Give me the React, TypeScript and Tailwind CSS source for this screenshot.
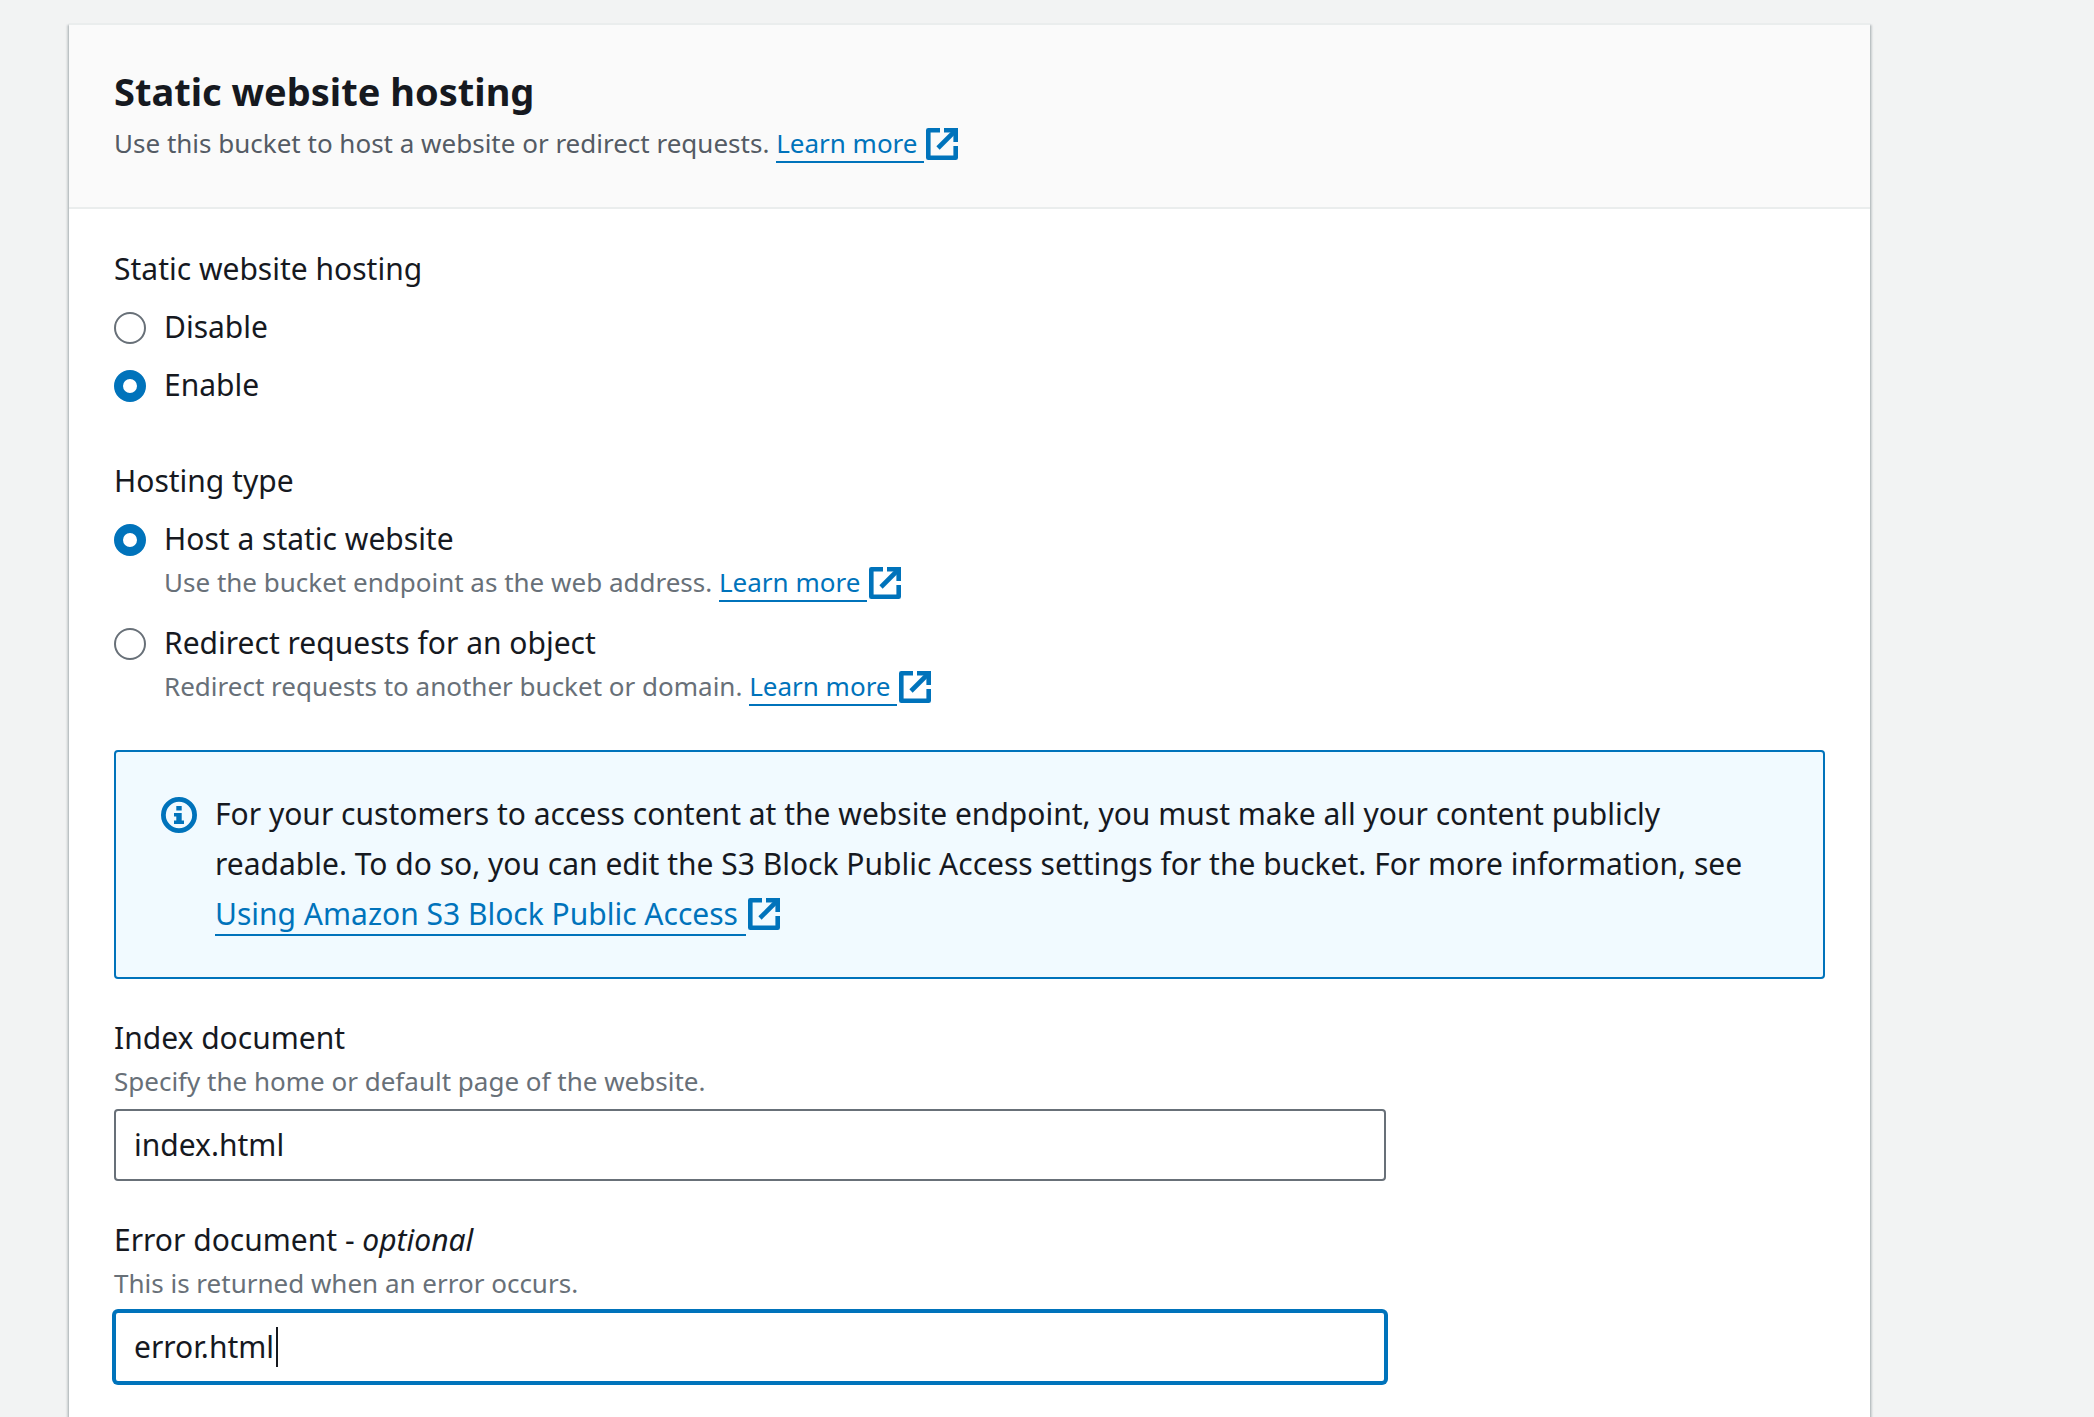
import { useState } from 'react';
import type { ReactNode } from 'react';

const ExternalIcon = ({ className = '' }: { className?: string }) => (
  <svg
    viewBox="0 0 32 32"
    className={`ml-0.5 inline-block size-8 ${className}`}
    fill="none"
    stroke="currentColor"
    strokeWidth={4.6}
    strokeLinejoin="round"
    aria-hidden="true"
  >
    <path d="M14 2.3H2.3v27.4h27.4V18" />
    <path d="M18 2.3h11.7V14" strokeLinejoin="miter" />
    <path d="M28.5 3.5 12 20" />
  </svg>
);

const InfoIcon = () => (
  <svg viewBox="0 0 36 36" className="mt-2 size-9 shrink-0 text-[#0073bb]" aria-hidden="true">
    <circle cx="18" cy="18" r="15.6" fill="none" stroke="currentColor" strokeWidth={4.8} />
    <path fill="currentColor" d="M15.3 9h5.4v4.4h-5.4zM13 16h7.7v7.4H23V27H13v-3.6h2.3v-3.8H13z" />
  </svg>
);

type ExternalLinkProps = {
  href: string;
  children: ReactNode;
  iconClassName?: string;
};

const ExternalLink = ({ href, children, iconClassName = 'align-[-7px]' }: ExternalLinkProps) => (
  <a href={href} className="whitespace-nowrap text-[#0073bb]">
    <span className="border-b-2 border-[#0073bb]">{children}&nbsp;</span>
    <ExternalIcon className={iconClassName} />
  </a>
);

type RadioOptionProps = {
  name: string;
  value: string;
  label: string;
  checked: boolean;
  onSelect: (value: string) => void;
  description?: ReactNode;
};

const RadioOption = ({ name, value, label, checked, onSelect, description }: RadioOptionProps) => {
  const id = `${name}-${value}`;
  return (
    <div className="flex gap-[18px]">
      <input
        type="radio"
        id={id}
        name={name}
        value={value}
        checked={checked}
        onChange={() => onSelect(value)}
        className="mt-2.5 size-8 shrink-0 appearance-none rounded-full border-2 border-[#687078] bg-white checked:border-[9px] checked:border-[#0073bb]"
      />
      <div>
        <label htmlFor={id} className="block">
          {label}
        </label>
        {description && <p className="text-[26px] leading-9 text-[#687078]">{description}</p>}
      </div>
    </div>
  );
};

export default function App() {
  const [hosting, setHosting] = useState('enable');
  const [hostingType, setHostingType] = useState('static');
  const [indexDocument, setIndexDocument] = useState('index.html');
  const [errorDocument, setErrorDocument] = useState('error.html');

  return (
    <main className="flex min-h-screen bg-[#f2f3f3] pt-[23px] pr-[224px] pl-[69px] font-['Noto_Sans',sans-serif] text-[30px] leading-[50px] text-[#16191f]">
      <section className="min-w-0 flex-1 border-t-2 border-[#eaeded] bg-white shadow-[0_2px_2px_rgba(0,28,36,0.3),2px_2px_2px_rgba(0,28,36,0.15),-2px_2px_2px_rgba(0,28,36,0.15)]">
        <header className="border-b-2 border-[#eaeded] bg-[#fafafa] px-[45px] pt-[34px] pb-11">
          <h2 className="text-[38px] leading-[64px] font-bold">Static website hosting</h2>
          <p className="text-[26px] leading-10 text-[#545b64]">
            Use this bucket to host a website or redirect requests.{' '}
            <ExternalLink href="#website-hosting">Learn more</ExternalLink>
          </p>
        </header>

        <form className="flex flex-col gap-[34px] px-[45px] pt-[35px] pb-8">
          <fieldset className="pb-3">
            <legend className="mb-2">Static website hosting</legend>
            <div className="flex flex-col gap-2">
              <RadioOption
                name="hosting"
                value="disable"
                label="Disable"
                checked={hosting === 'disable'}
                onSelect={setHosting}
              />
              <RadioOption
                name="hosting"
                value="enable"
                label="Enable"
                checked={hosting === 'enable'}
                onSelect={setHosting}
              />
            </div>
          </fieldset>

          <fieldset className="pb-3">
            <legend className="mb-2">Hosting type</legend>
            <div className="flex flex-col gap-[18px]">
              <RadioOption
                name="type"
                value="static"
                label="Host a static website"
                checked={hostingType === 'static'}
                onSelect={setHostingType}
                description={
                  <>
                    Use the bucket endpoint as the web address.{' '}
                    <ExternalLink href="#endpoints">Learn more</ExternalLink>
                  </>
                }
              />
              <RadioOption
                name="type"
                value="redirect"
                label="Redirect requests for an object"
                checked={hostingType === 'redirect'}
                onSelect={setHostingType}
                description={
                  <>
                    Redirect requests to another bucket or domain.{' '}
                    <ExternalLink href="#redirects">Learn more</ExternalLink>
                  </>
                }
              />
            </div>
          </fieldset>

          <div className="flex gap-[18px] rounded-sm border-2 border-[#0073bb] bg-[#f1faff] px-[45px] pt-[37px] pb-[38px]">
            <InfoIcon />
            <p>
              For your customers to access content at the website endpoint, you must make all your content publicly
              readable. To do so, you can edit the S3 Block Public Access settings for the bucket. For more
              information, see{' '}
              <ExternalLink href="#block-public-access" iconClassName="align-[-5px]">
                Using Amazon S3 Block Public Access
              </ExternalLink>
            </p>
          </div>

          <div className="grid grid-cols-4 gap-x-11 gap-y-[34px]">
            <div className="col-span-3">
              <label htmlFor="index-document" className="block">
                Index document
              </label>
              <p id="index-hint" className="text-[26px] leading-9 text-[#687078]">
                Specify the home or default page of the website.
              </p>
              <input
                id="index-document"
                type="text"
                aria-describedby="index-hint"
                value={indexDocument}
                onChange={(e) => setIndexDocument(e.target.value)}
                className="mt-2.5 block h-[72px] w-full rounded-sm border-2 border-[#687078] bg-white px-[18px] pb-0.5"
              />
            </div>

            <div className="col-span-3">
              <label htmlFor="error-document" className="block">
                Error document - <i>optional</i>
              </label>
              <p id="error-hint" className="text-[26px] leading-9 text-[#687078]">
                This is returned when an error occurs.
              </p>
              <div className="relative mt-2.5">
                <input
                  id="error-document"
                  type="text"
                  aria-describedby="error-hint"
                  value={errorDocument}
                  onChange={(e) => setErrorDocument(e.target.value)}
                  className="block h-[72px] w-full rounded-sm border-2 border-[#0073bb] bg-white px-[18px] pb-0.5 caret-transparent ring-2 ring-[#0073bb] outline-none"
                />
                {/* text cursor */}
                <span className="absolute top-4 left-[162px] h-10 w-0.5 bg-[#16191f]" aria-hidden="true" />
              </div>
            </div>
          </div>
        </form>
      </section>
    </main>
  );
}
